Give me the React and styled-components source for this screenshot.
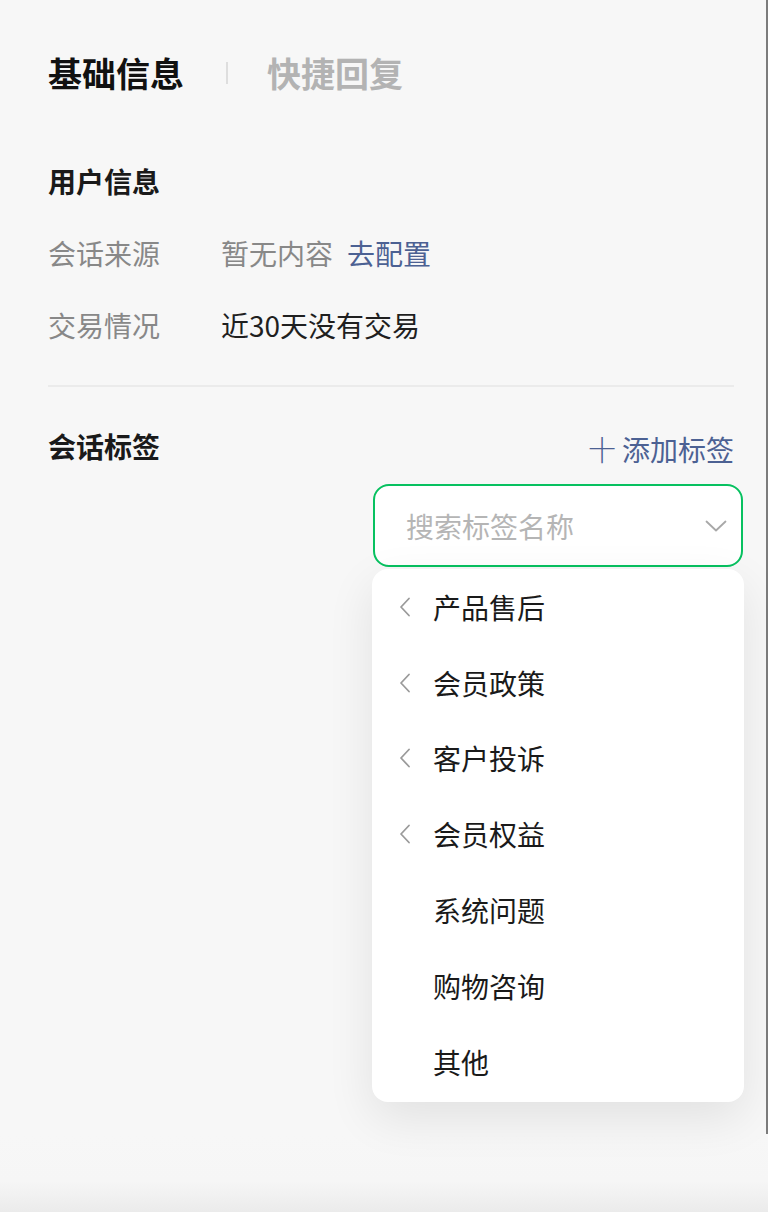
import React from 'react';
import styled, { createGlobalStyle } from 'styled-components';

const GlobalStyle = createGlobalStyle`
  html, body {
    margin: 0;
    padding: 0;
    background: #f7f7f7;
  }

  * {
    box-sizing: border-box;
    font-family: "Noto Sans CJK SC", "Noto Sans", sans-serif;
  }
`;

const categories = [
  { name: '产品售后', nested: true },
  { name: '会员政策', nested: true },
  { name: '客户投诉', nested: true },
  { name: '会员权益', nested: true },
  { name: '系统问题' },
  { name: '购物咨询' },
  { name: '其他' },
];

const ChevronLeft = () => (
  <svg width="12" height="20" viewBox="0 0 12 20" fill="none">
    <path d="M10 1.5L2 10l8 8.5" stroke="#9a9a9a" strokeWidth="1.8" strokeLinecap="round" strokeLinejoin="round" />
  </svg>
);

const ChevronDown = () => (
  <svg width="22" height="12" viewBox="0 0 22 12" fill="none">
    <path d="M1.5 1.5L11 10.5l9.5-9" stroke="#a8a8a8" strokeWidth="1.8" strokeLinecap="round" strokeLinejoin="round" />
  </svg>
);

function App({ className }) {
  return (
    <div className={className}>
      <GlobalStyle />
      <Panel>
        <Tabs>
          <Tab active>基础信息</Tab>
          <TabDivider />
          <Tab>快捷回复</Tab>
        </Tabs>

        <SectionTitle>用户信息</SectionTitle>
        <InfoRow>
          <Label>会话来源</Label>
          <Value muted>暂无内容</Value>
          <Link>去配置</Link>
        </InfoRow>
        <InfoRow>
          <Label>交易情况</Label>
          <Value>近30天没有交易</Value>
        </InfoRow>

        <Divider />

        <TagHeader>
          <SectionTitle as="div">会话标签</SectionTitle>
          <AddButton>
            <span className="plus">十</span>添加标签
          </AddButton>
        </TagHeader>

        <PickerArea>
          <Picker>
            <SearchBox>
              <Placeholder>搜索标签名称</Placeholder>
              <ChevronDown />
            </SearchBox>
            <Menu>
              {categories.map((c) => (
                <MenuItem key={c.name}>
                  <Arrow>{c.nested && <ChevronLeft />}</Arrow>
                  {c.name}
                </MenuItem>
              ))}
            </Menu>
          </Picker>
        </PickerArea>
      </Panel>
      <BottomFade />
    </div>
  );
}

const Panel = styled.div`
  height: 1134px;
  padding: 49px 32px 0 48px;
  border-right: 2px solid #7c7c7c;
  display: flex;
  flex-direction: column;
`;

const Tabs = styled.div`
  display: flex;
  align-items: center;
  height: 48px;
`;

const Tab = styled.div`
  font-size: 34px;
  line-height: 48px;
  font-weight: 700;
  color: ${(p) => (p.active ? '#111111' : '#b3b3b3')};
`;

const TabDivider = styled.div`
  width: 2px;
  height: 22px;
  background: #dedede;
  margin: 0 39px 0 42px;
`;

const SectionTitle = styled.h3`
  margin: 64px 0 0;
  font-size: 28px;
  line-height: 40px;
  font-weight: 700;
  color: #1a1a1a;
`;

const InfoRow = styled.div`
  display: flex;
  align-items: center;
  height: 40px;
  margin-top: 32px;
  font-size: 28px;
  line-height: 40px;
`;

const Label = styled.span`
  width: 173px;
  flex: none;
  color: #888888;
`;

const Value = styled.span`
  color: ${(p) => (p.muted ? '#888888' : '#1f1f1f')};
`;

const Link = styled.span`
  margin-left: 14px;
  color: #4c6193;
`;

const Divider = styled.div`
  height: 2px;
  background: #ebebeb;
  margin-top: 40px;
`;

const TagHeader = styled.div`
  display: flex;
  justify-content: space-between;
  align-items: center;
  margin-top: 39px;
  height: 40px;

  ${SectionTitle} {
    margin: 0;
  }
`;

const AddButton = styled.div`
  font-size: 28px;
  line-height: 40px;
  color: #4c6193;
  margin-top: 6px;

  .plus {
    font-weight: 300;
    margin-right: 6px;
  }
`;

const PickerArea = styled.div`
  display: flex;
  justify-content: flex-end;
  margin-top: 18px;
  margin-right: -10px;
`;

const Picker = styled.div`
  position: relative;
  width: 372px;
`;

const SearchBox = styled.div`
  height: 83px;
  margin-left: 1px;
  margin-right: 1px;
  border: 2px solid #07c160;
  border-radius: 16px;
  background: #ffffff;
  display: flex;
  align-items: center;
  justify-content: space-between;
  padding: 0 14px 0 31px;
`;

const Placeholder = styled.span`
  font-size: 28px;
  color: #b5b5b5;
`;

const Menu = styled.ul`
  position: absolute;
  top: 85px;
  left: 0;
  right: 0;
  margin: 0;
  padding: 0 0 2px;
  list-style: none;
  background: #ffffff;
  border-radius: 16px;
  box-shadow: 0 16px 48px rgba(0, 0, 0, 0.09);
`;

const MenuItem = styled.li`
  height: 75.8px;
  display: flex;
  align-items: center;
  font-size: 28px;
  color: #1a1a1a;
  padding-left: 27px;
`;

const Arrow = styled.span`
  width: 34px;
  display: flex;
  align-items: center;
`;

const BottomFade = styled.div`
  height: 78px;
  background: linear-gradient(#f7f7f7 0%, #f6f6f6 60%, #ebebeb 100%);
`;

const StyledApp = styled(App)`
  width: 768px;
  height: 1212px;
  background: #f7f7f7;
  overflow: hidden;
  display: flex;
  flex-direction: column;
`;

export default StyledApp;
